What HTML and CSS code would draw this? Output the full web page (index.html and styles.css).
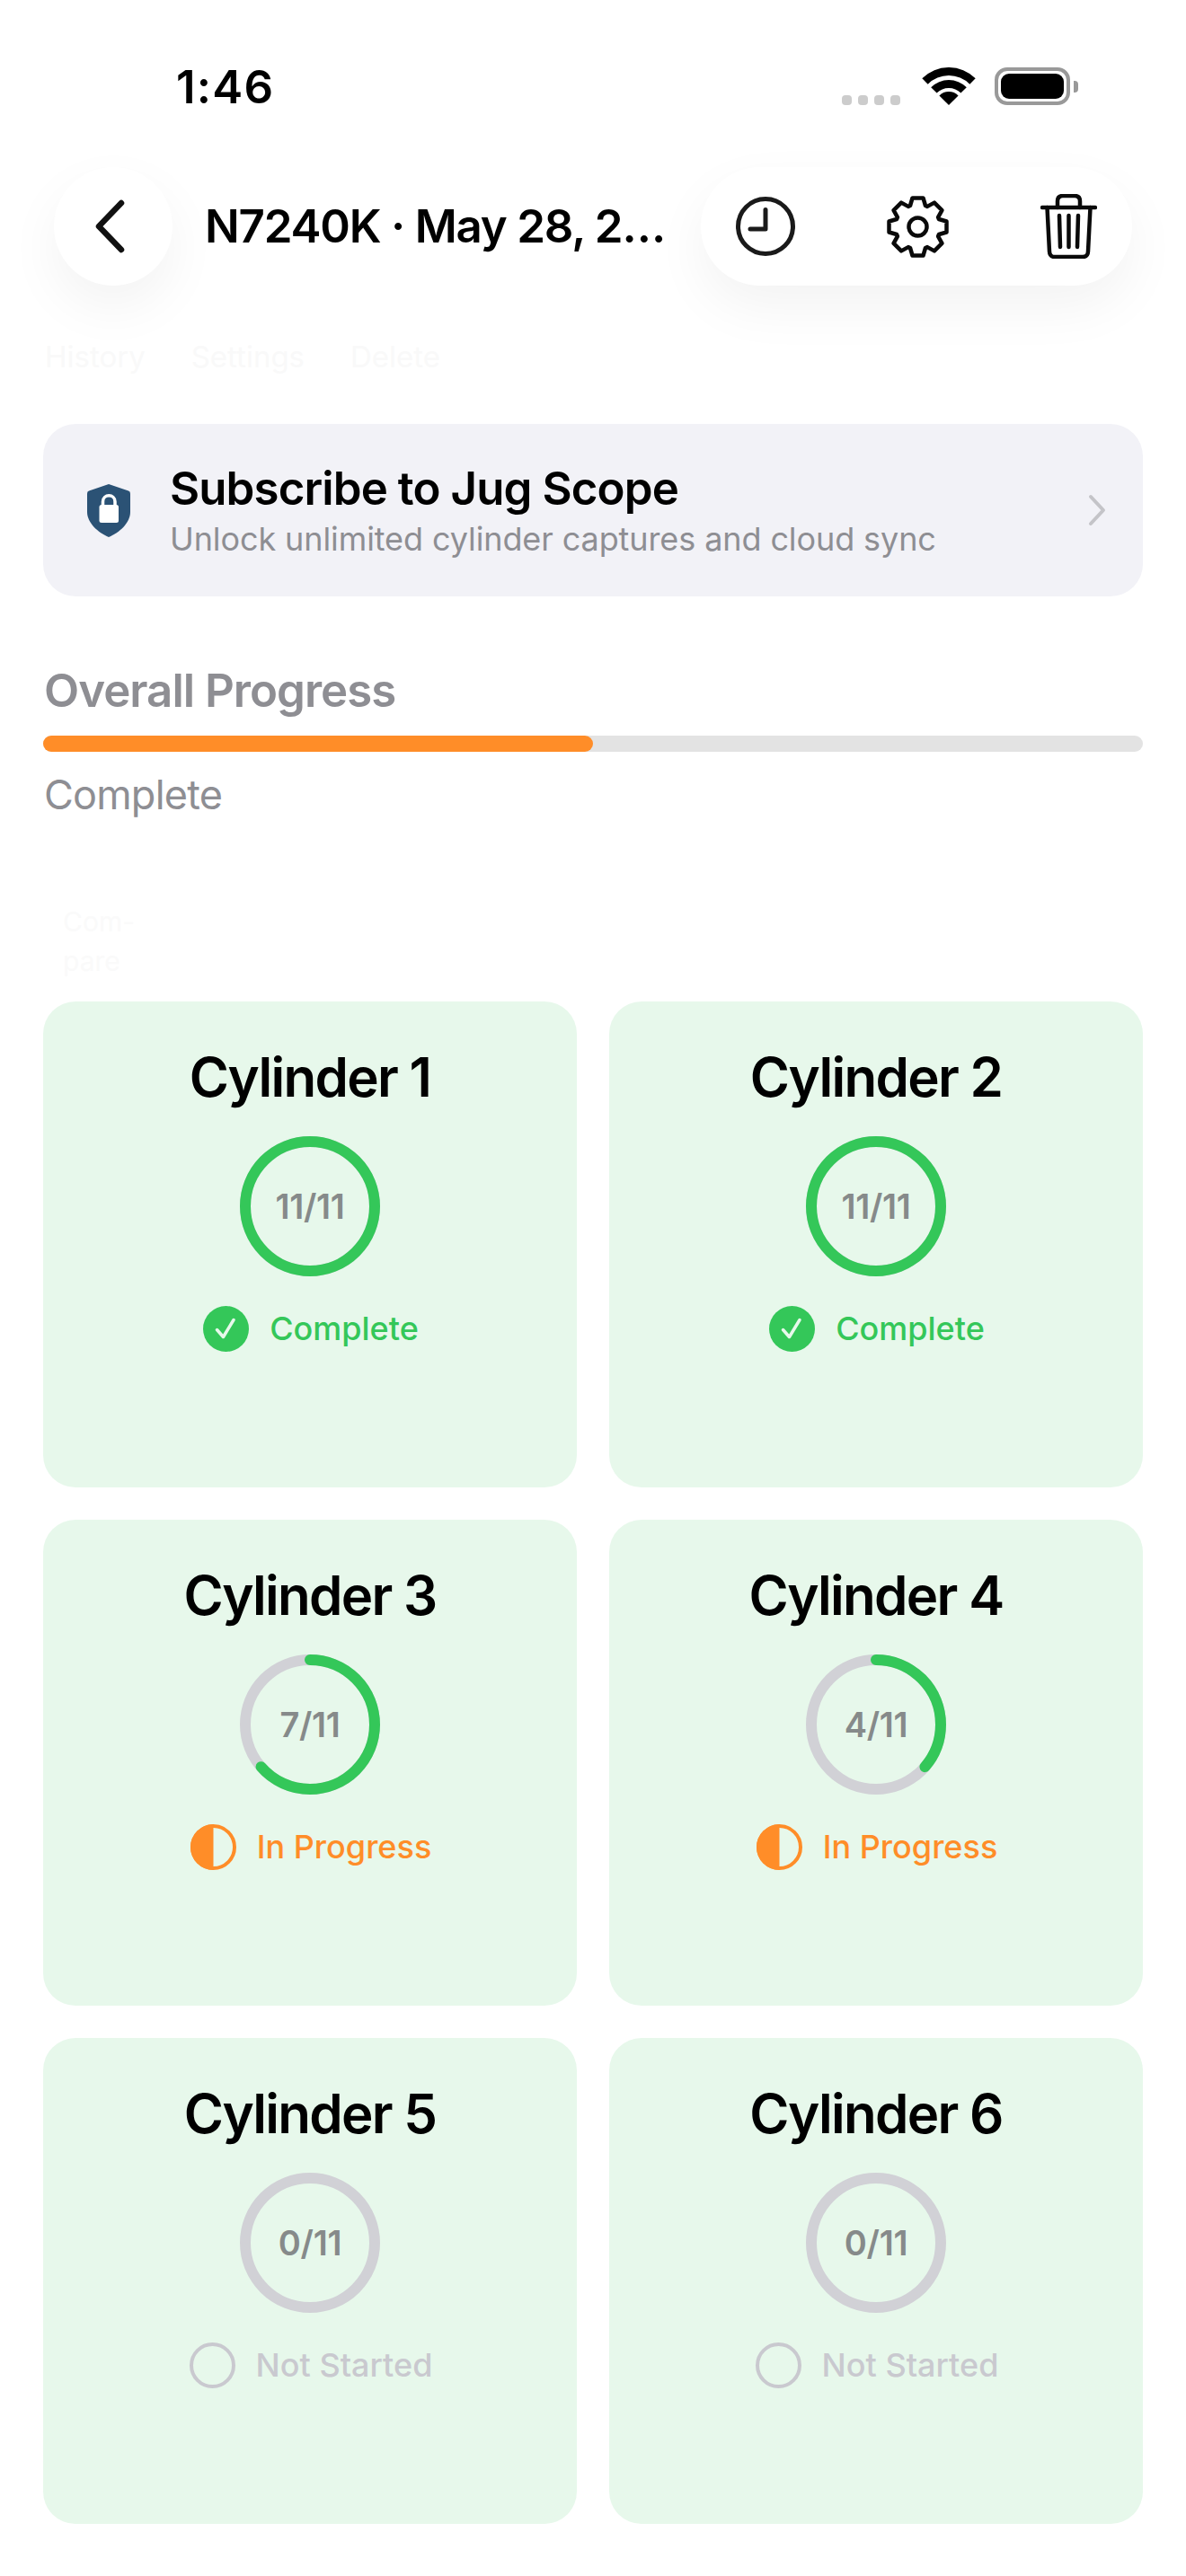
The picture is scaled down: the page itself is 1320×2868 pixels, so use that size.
FILE: index.html
```html
<!DOCTYPE html>
<html lang="en">
<head>
    <meta charset="UTF-8">
    <meta name="viewport" content="width=device-width, initial-scale=1.0">
    <title>N7240K Inspection</title>
    <link rel="stylesheet" href="styles.css">
</head>
<body>
    <header class="statusBar">
        <span class="clock">1:46</span>
        <div class="statusIcons">
            <div class="signal"><i></i><i></i><i></i><i></i></div>
            <svg class="wifi" width="60" height="42" viewBox="-1 0 60 42">
                <path d="M29 42L18.4 31.4A15 15 0 0 1 39.6 31.4Z"/>
                <path d="M9.2 22.2A28 28 0 0 1 48.8 22.2L42.4 28.6A19 19 0 0 0 15.6 28.6Z"/>
                <path d="M-.7 12.3A42 42 0 0 1 58.7 12.3L52.3 18.7A33 33 0 0 0 5.7 18.7Z"/>
            </svg>
            <div class="battery"><div class="batteryFill"></div></div>
            <div class="batteryNub"></div>
        </div>
    </header>

    <nav class="navBar">
        <button type="button" class="backButton" aria-label="Back">
            <svg width="36" height="60" viewBox="0 0 36 60" fill="none" stroke="#111" stroke-width="6.5" stroke-linecap="round" stroke-linejoin="round">
                <path d="M30 4L5 30L30 56"/>
            </svg>
        </button>
        <h1 class="navTitle">N7240K · May 28, 2…</h1>
        <div class="navActions">
            <svg width="66" height="66" viewBox="0 0 66 66" fill="none" stroke="#1a1a1a" stroke-width="5" stroke-linecap="round" stroke-linejoin="round">
                <circle cx="33" cy="33" r="30.5"/>
                <path d="M33 14.5V36H16"/>
            </svg>
            <svg width="69" height="69" viewBox="0 0 69 69" fill="none" stroke="#0a0a0a" stroke-width="4.5" stroke-linejoin="round">
                <path d="M26 11L28.5 2.5H40.5L43 11L45.1 11.9L52.9 7.6L61.4 16.1L57.1 23.9L58 26L66.5 28.5V40.5L58 43L57.1 45.1L61.4 52.9L52.9 61.4L45.1 57.1L43 58L40.5 66.5H28.5L26 58L23.9 57.1L16.1 61.4L7.6 52.9L11.9 45.1L11 43L2.5 40.5V28.5L11 26L11.9 23.9L7.6 16.1L16.1 7.6L23.9 11.9Z"/>
                <circle cx="34.5" cy="34.5" r="10"/>
            </svg>
            <svg width="63" height="72" viewBox="0 0 63 72" fill="none" stroke="#0a0a0a" stroke-width="4.5" stroke-linecap="round" stroke-linejoin="round">
                <path d="M2 15H61"/>
                <path d="M19 15V8Q19 2 25 2H38Q44 2 44 8V15"/>
                <path d="M7.5 15L10 64Q10.300 70 16 70H47Q52.700 70 53 64L55.500 15"/>
                <path d="M21 24L22 59M31.500 24V59M42 24L41 59"/>
            </svg>
        </div>
    </nav>

    <div class="ghostTabs"><span>History</span><span>Settings</span><span>Delete</span></div>

    <main class="content">
        <section class="subscribeBanner">
            <svg class="shield" width="48" height="59" viewBox="0 0 48 59">
                <path d="M24 0L46 7.500Q48 8.200 48 10.500V31C48 43 36 54 24 59C12 54 0 43 0 31V10.500Q0 8.200 2 7.500Z" fill="#2b5275"/>
                <path d="M13.500 25.500Q13.500 23 16 23H32.500Q35 23 35 25.500V40.500Q35 43 32.500 43H16Q13.500 43 13.500 40.500Z" fill="#fff"/>
                <path d="M17.500 24V19.500C17.500 10.500 31 10.500 31 19.500V24" fill="none" stroke="#fff" stroke-width="3.500"/>
            </svg>
            <div class="subscribeText">
                <h2>Subscribe to Jug Scope</h2>
                <p>Unlock unlimited cylinder captures and cloud sync</p>
            </div>
            <svg width="22" height="36" viewBox="0 0 22 36" fill="none" stroke="#c4c4c8" stroke-width="4" stroke-linecap="round" stroke-linejoin="round">
                <path d="M4 3L18 18L4 33"/>
            </svg>
        </section>

        <section class="progress">
            <h2>Overall Progress</h2>
            <div class="progressTrack"><div class="progressFill" style="width: 50%"></div></div>
            <p>Complete</p>
        </section>

        <div class="ghostCompare">Com-<br>pare</div>

        <section class="cylinderGrid">
            <article class="cylinderCard">
                <h3>Cylinder 1</h3>
                <div class="ring">
                    <svg width="156" height="156" viewBox="0 0 156 156"><circle class="ringTrack" cx="78" cy="78" r="72"/><circle class="ringValue" cx="78" cy="78" r="72" pathLength="11" stroke-dasharray="11 11"/></svg>
                    <span>11/11</span>
                </div>
                <div class="status complete">
                    <svg width="51" height="51" viewBox="0 0 51 51"><circle cx="25.500" cy="25.500" r="25.500" fill="#34c759"/><path d="M15.500 26.500L22.500 34.500L34 15.500" fill="none" stroke="#e7f8eb" stroke-width="3.500" stroke-linecap="round" stroke-linejoin="round"/></svg>
                    <span>Complete</span>
                </div>
            </article>
            <article class="cylinderCard">
                <h3>Cylinder 2</h3>
                <div class="ring">
                    <svg width="156" height="156" viewBox="0 0 156 156"><circle class="ringTrack" cx="78" cy="78" r="72"/><circle class="ringValue" cx="78" cy="78" r="72" pathLength="11" stroke-dasharray="11 11"/></svg>
                    <span>11/11</span>
                </div>
                <div class="status complete">
                    <svg width="51" height="51" viewBox="0 0 51 51"><circle cx="25.500" cy="25.500" r="25.500" fill="#34c759"/><path d="M15.500 26.500L22.500 34.500L34 15.500" fill="none" stroke="#e7f8eb" stroke-width="3.500" stroke-linecap="round" stroke-linejoin="round"/></svg>
                    <span>Complete</span>
                </div>
            </article>
            <article class="cylinderCard">
                <h3>Cylinder 3</h3>
                <div class="ring">
                    <svg width="156" height="156" viewBox="0 0 156 156"><circle class="ringTrack" cx="78" cy="78" r="72"/><circle class="ringValue" cx="78" cy="78" r="72" pathLength="11" stroke-dasharray="7 11"/></svg>
                    <span>7/11</span>
                </div>
                <div class="status inProgress">
                    <svg width="51" height="51" viewBox="0 0 51 51"><circle cx="25.500" cy="25.500" r="23.500" fill="none" stroke="#ff8d28" stroke-width="4"/><path d="M25.500 0A25.500 25.500 0 0 0 25.500 51Z" fill="#ff8d28"/></svg>
                    <span>In Progress</span>
                </div>
            </article>
            <article class="cylinderCard">
                <h3>Cylinder 4</h3>
                <div class="ring">
                    <svg width="156" height="156" viewBox="0 0 156 156"><circle class="ringTrack" cx="78" cy="78" r="72"/><circle class="ringValue" cx="78" cy="78" r="72" pathLength="11" stroke-dasharray="4 11"/></svg>
                    <span>4/11</span>
                </div>
                <div class="status inProgress">
                    <svg width="51" height="51" viewBox="0 0 51 51"><circle cx="25.500" cy="25.500" r="23.500" fill="none" stroke="#ff8d28" stroke-width="4"/><path d="M25.500 0A25.500 25.500 0 0 0 25.500 51Z" fill="#ff8d28"/></svg>
                    <span>In Progress</span>
                </div>
            </article>
            <article class="cylinderCard">
                <h3>Cylinder 5</h3>
                <div class="ring">
                    <svg width="156" height="156" viewBox="0 0 156 156"><circle class="ringTrack" cx="78" cy="78" r="72"/></svg>
                    <span>0/11</span>
                </div>
                <div class="status notStarted">
                    <svg width="51" height="51" viewBox="0 0 51 51"><circle cx="25.500" cy="25.500" r="23.500" fill="none" stroke="#c9c9cf" stroke-width="4"/></svg>
                    <span>Not Started</span>
                </div>
            </article>
            <article class="cylinderCard">
                <h3>Cylinder 6</h3>
                <div class="ring">
                    <svg width="156" height="156" viewBox="0 0 156 156"><circle class="ringTrack" cx="78" cy="78" r="72"/></svg>
                    <span>0/11</span>
                </div>
                <div class="status notStarted">
                    <svg width="51" height="51" viewBox="0 0 51 51"><circle cx="25.500" cy="25.500" r="23.500" fill="none" stroke="#c9c9cf" stroke-width="4"/></svg>
                    <span>Not Started</span>
                </div>
            </article>
        </section>
    </main>
</body>
</html>
```

FILE: styles.css
```css
* {
    box-sizing: border-box;
}

body {
    font-family: Inter, "Liberation Sans", sans-serif;
    margin: 0;
    padding: 0;
    height: 2868px;
    overflow: hidden;
    background-color: #fff;
    color: #000;
}

h1, h2, h3, p {
    margin: 0;
}

.statusBar {
    display: flex;
    justify-content: space-between;
    align-items: flex-start;
    height: 186px;
    padding: 70px 120px 0 196px;
}

.clock {
    font-size: 51px;
    line-height: 54px;
    font-weight: 600;
    letter-spacing: 1.2px;
}

.statusIcons {
    display: flex;
    align-items: flex-start;
    margin-top: 5px;
}

.signal {
    display: flex;
    gap: 7px;
    margin-top: 31px;
    margin-right: 24px;
}

.signal i {
    width: 11px;
    height: 11px;
    border-radius: 4px;
    background-color: #ccc;
}

.wifi {
    fill: #000;
    margin-right: 21px;
}

.battery {
    width: 84px;
    height: 42px;
    padding: 3px;
    border: 4px solid #999;
    border-radius: 14px;
}

.batteryFill {
    height: 100%;
    border-radius: 9px;
    background-color: #000;
}

.batteryNub {
    width: 5px;
    height: 13px;
    margin: 15px 0 0 4px;
    border-radius: 0 4px 4px 0;
    background-color: #999;
}

.navBar {
    display: flex;
    align-items: center;
    height: 132px;
    padding: 0 60px;
}

.backButton {
    display: flex;
    align-items: center;
    justify-content: center;
    flex: 0 0 132px;
    height: 132px;
    padding: 0 6px 0 0;
    border: none;
    border-radius: 50%;
    background-color: #fff;
    box-shadow: 0 24px 60px rgba(0, 0, 0, 0.05);
}

.navTitle {
    flex: 1;
    padding-left: 36px;
    font-size: 51px;
    line-height: 60px;
    font-weight: 600;
    letter-spacing: -1.2px;
    white-space: nowrap;
}

.navActions {
    display: flex;
    align-items: center;
    flex: 0 0 480px;
    height: 132px;
    padding: 0 39px;
    justify-content: space-between;
    border-radius: 66px;
    background-color: #fff;
    box-shadow: 0 24px 60px rgba(0, 0, 0, 0.05);
}

.ghostTabs {
    display: flex;
    gap: 51px;
    height: 154px;
    padding: 57px 0 0 50px;
    font-size: 33px;
    line-height: 44px;
    color: #f9f9f9;
}

.content {
    padding: 0 48px;
}

.subscribeBanner {
    display: flex;
    align-items: center;
    height: 192px;
    padding: 0 40px 0 49px;
    border-radius: 36px;
    background-color: #f2f2f7;
}

.shield {
    flex: none;
}

.subscribeText {
    flex: 1;
    padding-left: 44px;
}

.subscribeText h2 {
    font-size: 51px;
    line-height: 60px;
    font-weight: 600;
    letter-spacing: -0.9px;
}

.subscribeText p {
    margin-top: 4px;
    font-size: 36px;
    line-height: 44px;
    letter-spacing: -0.1px;
    color: #8e8e93;
}

.progress {
    margin-top: 75px;
}

.progress h2 {
    padding-left: 1px;
    font-size: 51px;
    line-height: 60px;
    font-weight: 600;
    letter-spacing: -1px;
    color: #8e8e93;
}

.progressTrack {
    height: 18px;
    margin-top: 20px;
    border-radius: 9px;
    background-color: #e3e3e3;
}

.progressFill {
    height: 100%;
    border-radius: 9px;
    background-color: #ff8d28;
}

.progress p {
    margin-top: 20px;
    padding-left: 1px;
    font-size: 45px;
    line-height: 56px;
    letter-spacing: -0.8px;
    color: #8e8e93;
}

.ghostCompare {
    height: 202px;
    padding: 91px 0 0 22px;
    font-size: 30px;
    line-height: 44px;
    color: #fafafa;
}

.cylinderGrid {
    display: grid;
    grid-template-columns: 1fr 1fr;
    gap: 36px;
}

.cylinderCard {
    display: flex;
    flex-direction: column;
    align-items: center;
    height: 541px;
    padding-top: 48px;
    border-radius: 36px;
    background-color: #e7f8eb;
}

.cylinderCard h3 {
    font-size: 60px;
    line-height: 72px;
    font-weight: 600;
    letter-spacing: -1.7px;
}

.ring {
    display: grid;
    place-items: center;
    width: 156px;
    height: 156px;
    margin-top: 30px;
}

.ring svg, .ring span {
    grid-area: 1 / 1;
}

.ring span {
    font-size: 38px;
    font-weight: 600;
    letter-spacing: -0.3px;
    color: #868a8a;
}

.ring svg {
    transform: rotate(-90deg);
}

.ringTrack, .ringValue {
    fill: none;
    stroke-width: 12;
}

.ringTrack {
    stroke: #d1d1d6;
}

.ringValue {
    stroke: #34c759;
    stroke-linecap: round;
}

.status {
    display: flex;
    align-items: center;
    gap: 23px;
    margin-top: 33px;
    padding-left: 2px;
    font-size: 36px;
    line-height: 51px;
    font-weight: 500;
}

.complete {
    color: #34c759;
}

.inProgress {
    color: #ff8d28;
}

.notStarted {
    color: #c9c9cf;
}
```
